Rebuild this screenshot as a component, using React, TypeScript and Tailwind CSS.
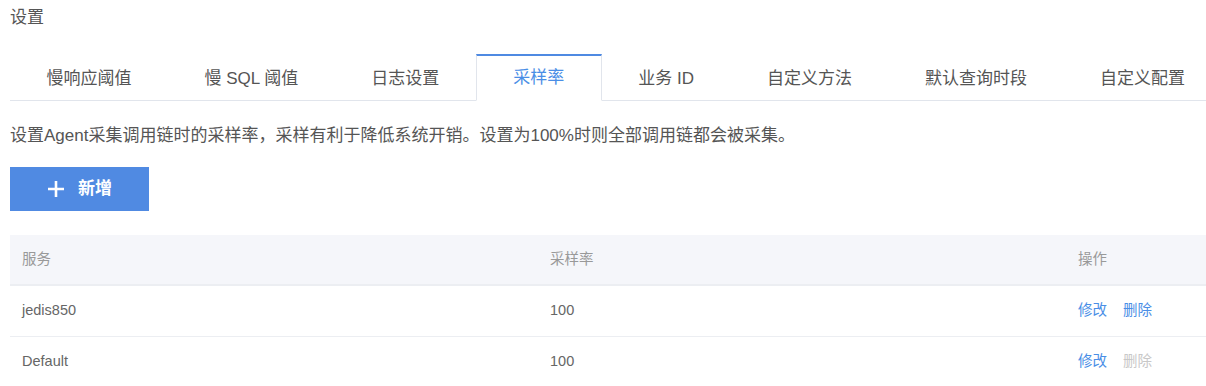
import React from 'react';

const tabs = ['慢响应阈值', '慢 SQL 阈值', '日志设置', '采样率', '业务 ID', '自定义方法', '默认查询时段', '自定义配置'];

const rows = [
  { service: 'jedis850', rate: '100', canDelete: true },
  { service: 'Default', rate: '100', canDelete: false },
];

export default function App() {
  const active = '采样率';

  return (
    <div
      className="w-[1206px] h-[386px] overflow-hidden bg-white pl-[10px]"
      style={{ fontFamily: '"Liberation Sans", "Noto Sans CJK SC", sans-serif' }}
    >
      {/* Page title */}
      <div className="pt-[6px] text-[17px] leading-[24px] text-[#555]">设置</div>

      {/* Tabs */}
      <div className="mt-[24px] flex h-[47px] border-b border-[#e1e5ec]">
        {tabs.map(tab => {
          const isActive = tab === active;
          return (
            <div
              key={tab}
              className={`-mb-px flex items-center px-[36.5px] text-[17px] ${
                isActive
                  ? 'border-x border-t-2 border-x-[#e1e5ec] border-t-[#4f8ae2] border-b border-b-white bg-white text-[#4a8ee6]'
                  : 'border-t-2 border-transparent text-[#555]'
              }`}
            >
              <span className="whitespace-pre">{tab}</span>
            </div>
          );
        })}
      </div>

      {/* Description */}
      <p className="mt-[23px] text-[17px] leading-[24px] text-[#555]">
        设置Agent采集调用链时的采样率，采样有利于降低系统开销。设置为100%时则全部调用链都会被采集。
      </p>

      {/* Add button */}
      <button className="mt-[19px] flex h-[44px] w-[139px] items-center bg-[#508ae2] pl-[37px] text-white">
        <svg width="18" height="18" viewBox="0 0 18 18" aria-hidden="true">
          <path d="M9 1v16M1 9h16" stroke="currentColor" strokeWidth="2.6" />
        </svg>
        <span className="ml-[13px] text-[17px] font-bold">新增</span>
      </button>

      {/* Table */}
      <div className="mt-[24px] text-[14.5px]">
        <div className="flex h-[51px] items-center border-b-2 border-[#eceef2] bg-[#f5f6fa] text-[#999]">
          <div className="w-[540px] pl-[12px]">服务</div>
          <div className="w-[528px]">采样率</div>
          <div>操作</div>
        </div>
        {rows.map(row => (
          <div key={row.service} className="flex h-[51px] items-center border-b border-[#eceef2] text-[#666]">
            <div className="w-[540px] pl-[12px]">{row.service}</div>
            <div className="w-[528px]">{row.rate}</div>
            <div className="flex gap-[16px]">
              <span className="text-[#4a8ee6]">修改</span>
              <span className={row.canDelete ? 'text-[#4a8ee6]' : 'text-[#c8c8c8]'}>删除</span>
            </div>
          </div>
        ))}
      </div>
    </div>
  );
}
